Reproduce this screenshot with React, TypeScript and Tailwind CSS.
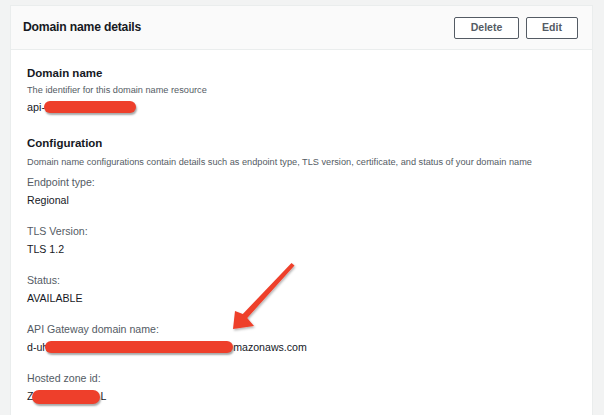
import React from 'react';

const fields = [
  { label: 'Endpoint type:', value: 'Regional' },
  { label: 'TLS Version:', value: 'TLS 1.2' },
  { label: 'Status:', value: 'AVAILABLE' },
];

// red scribble used to hide private values in the screenshot
const Redact: React.FC<{ className: string }> = ({ className }) => (
  <span
    className={`inline-block align-middle rounded-full bg-[#ee3f2b] shadow-[1px_2px_2px_rgba(0,0,0,0.35)] ${className}`}
  />
);

export default function App() {
  return (
    <div
      className="relative w-[604px] h-[415px] overflow-hidden bg-[#f2f3f3] pt-[5px] pl-[10px] pr-[11px] text-[#16191f]"
      style={{ fontFamily: '"Liberation Sans", Arial, sans-serif' }}
    >
      <div className="h-full bg-white border border-b-0 border-[#eaeded]">
        <div className="h-[44px] bg-[#fafafa] border-b border-[#eaeded] flex items-center justify-between pl-[12px] pr-[14px]">
          <h2 className="text-[12.2px] font-bold leading-none tracking-[-0.2px]">Domain name details</h2>
          <div className="flex gap-[7px]">
            <button className="w-[65px] h-[22px] border border-[#545b64] rounded-[2px] bg-white text-[10.5px] font-bold text-[#545b64]">
              Delete
            </button>
            <button className="w-[52px] h-[22px] border border-[#545b64] rounded-[2px] bg-white text-[10.5px] font-bold text-[#545b64]">
              Edit
            </button>
          </div>
        </div>

        <div className="px-[16px] pt-[15px]">
          <h3 className="text-[11.5px] font-bold leading-[16px]">Domain name</h3>
          <p className="mt-[2px] text-[9.2px] leading-[14px] text-[#545b64]">The identifier for this domain name resource</p>
          <div className="mt-[2px] text-[10.8px] leading-[16px] flex items-center">
            <span>api-</span>
            <Redact className="w-[92px] h-[12px] -ml-[1px]" />
          </div>

          <h3 className="mt-[20px] text-[11.5px] font-bold leading-[16px]">Configuration</h3>
          <p className="mt-[4px] text-[9.2px] leading-[14px] text-[#545b64]">
            Domain name configurations contain details such as endpoint type, TLS version, certificate, and status of your domain name
          </p>

          <div className="mt-[5px] flex flex-col gap-[15px]">
            {fields.map(f => (
              <div key={f.label} className="flex flex-col gap-[2px] text-[10.6px] leading-[16px]">
                <span className="text-[#545b64]">{f.label}</span>
                <span>{f.value}</span>
              </div>
            ))}
            <div className="flex flex-col gap-[2px] text-[10.6px] leading-[16px]">
              <span className="text-[#545b64]">API Gateway domain name:</span>
              <div className="flex items-center">
                <span>d-uh</span>
                <Redact className="w-[188px] h-[12px] -ml-[3px]" />
                <span>mazonaws.com</span>
              </div>
            </div>
            <div className="flex flex-col gap-[2px] text-[10.6px] leading-[16px]">
              <span className="text-[#545b64]">Hosted zone id:</span>
              <div className="flex items-center">
                <span>Z</span>
                <Redact className="w-[68px] h-[14px] -ml-[1px] mt-[2px]" />
                <span>L</span>
              </div>
            </div>
          </div>
        </div>
      </div>

      {/* annotation arrow */}
      <svg className="absolute left-0 top-0 pointer-events-none" width="604" height="415" viewBox="0 0 604 415">
        <defs>
          <filter id="sh" x="-20%" y="-20%" width="140%" height="140%">
            <feDropShadow dx="1" dy="1.5" stdDeviation="1" floodColor="#000" floodOpacity="0.3" />
          </filter>
        </defs>
        <polygon
          points="291.5,263 242.8,314 235,311 233,329 254,326 247.2,318 294.5,265.5"
          fill="#ee3f2b"
          filter="url(#sh)"
        />
      </svg>
    </div>
  );
}
